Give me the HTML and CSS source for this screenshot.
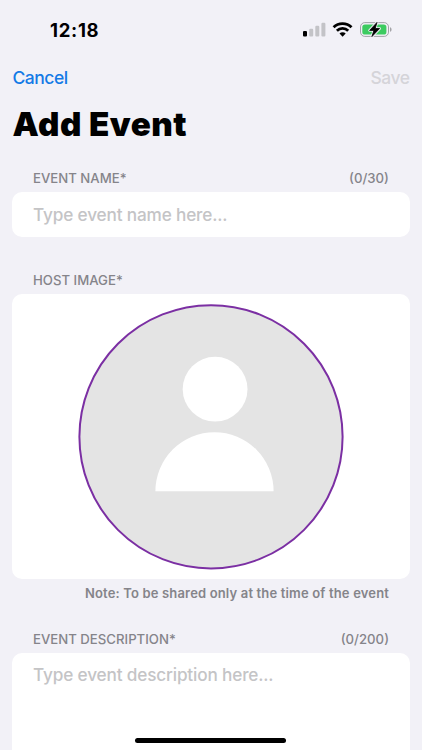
FILE: index.html
```
<!DOCTYPE html>
<html lang="en">
<head>
    <meta charset="UTF-8">
    <meta name="viewport" content="width=device-width, initial-scale=1.0">
    <title>Add Event</title>
    <link rel="stylesheet" href="styles.css">
</head>
<body>
    <div class="status-bar">
        <span class="time">12:18</span>
        <!-- signal, wifi, battery -->
        <svg class="status-icons" width="90" height="16" viewBox="303 22 90 16">
            <rect x="303" y="31" width="4" height="5.6" rx="1.1" fill="#000"/>
            <rect x="309.2" y="28.8" width="4" height="7.8" rx="1.1" fill="#c3c3c7"/>
            <rect x="315.3" y="25.8" width="4" height="10.8" rx="1.1" fill="#c3c3c7"/>
            <rect x="321.4" y="22.8" width="4" height="13.8" rx="1.1" fill="#c3c3c7"/>
            <g fill="none" stroke="#000" stroke-width="2.8">
                <path d="M333.6 27.3a12.7 12.7 0 0 1 17.9 0"/>
                <path d="M336.9 30.8a8 8 0 0 1 11.3 0"/>
            </g>
            <path d="M342.6 36.7l-3.1-3.1a4.4 4.4 0 0 1 6.2 0z"/>
            <rect x="360.5" y="22.6" width="28" height="13.8" rx="4.3" fill="none" stroke="#a3a3a7"/>
            <path d="M390.1 27.2v4.6c1.9-.7 1.9-3.9 0-4.6z" fill="#98989c"/>
            <rect x="362.3" y="24.4" width="24.1" height="10.2" rx="2.7" fill="#3ccb60"/>
            <path d="M377 22.4l-7.4 8h4.3l-2 6.2 7.7-8.1h-4.4z" stroke="#f2f1f7" stroke-width="2.6" stroke-linejoin="round"/>
            <path d="M377 22.4l-7.4 8h4.3l-2 6.2 7.7-8.1h-4.4z" stroke="#000" stroke-width=".8" stroke-linejoin="round"/>
        </svg>
    </div>

    <nav class="nav-bar">
        <a class="cancel-btn">Cancel</a>
        <a class="save-btn">Save</a>
    </nav>
    <h1><span>Add Event</span></h1>

    <section class="name-section">
        <div class="section-header">
            <span class="name-label">EVENT NAME*</span>
            <span class="name-count">(0/30)</span>
        </div>
        <div class="card name-card"><span class="placeholder name-hint">Type event name here...</span></div>
    </section>

    <section class="image-section">
        <div class="section-header">
            <span class="image-label">HOST IMAGE*</span>
        </div>
        <div class="card image-card">
            <svg class="avatar" width="266" height="266" viewBox="78 304 266 266">
                <circle cx="211" cy="436.8" r="131.6" fill="#e4e4e4" stroke="#7b2fa3" stroke-width="2"/>
                <circle cx="215.1" cy="389.2" r="32.4" fill="#fff"/>
                <path d="M155.4 491.3a59.1 59.1 0 0 1 118.2 0z" fill="#fff"/>
            </svg>
        </div>
        <div class="note"><span>Note: To be shared only at the time of the event</span></div>
    </section>

    <section class="description-section">
        <div class="section-header">
            <span class="description-label">EVENT DESCRIPTION*</span>
            <span class="description-count">(0/200)</span>
        </div>
        <div class="card description-card"><span class="placeholder description-hint">Type event description here...</span></div>
    </section>

    <div class="home-indicator"></div>
</body>
</html>
```
FILE: styles.css
```
body {
    font-family: Inter, "Liberation Sans", sans-serif;
    margin: 0;
    height: 750px;
    position: relative;
    overflow: hidden;
    background-color: #f2f1f7;
    color: #000;
    white-space: nowrap;
}
.status-bar {
    display: flex;
    justify-content: space-between;
    align-items: center;
    height: 59px;
    padding: 0 29px 1px 50px;
}
.time {
    font-size: 18.5px;
    font-weight: 700;
    letter-spacing: 0.7px;
}
.nav-bar {
    display: flex;
    justify-content: space-between;
    align-items: center;
    height: 34px;
    padding: 0 12.5px 2px;
    font-size: 17.5px;
    font-weight: 500;
    letter-spacing: -0.5px;
}
.cancel-btn {
    color: #147ae6;
}
.save-btn {
    color: #d5d4d9;
}
h1 {
    margin: 0;
    padding: 8px 12.5px 0;
    height: 60px;
    font-size: 33.2px;
    font-weight: 900;
    line-height: 41px;
    letter-spacing: 0.5px;
}
.section-header {
    display: flex;
    justify-content: space-between;
    align-items: center;
    height: 28px;
    padding: 0 33px;
    font-size: 13.2px;
    font-weight: 500;
    color: #85848a;
}
.card {
    margin: 0 12px;
    background-color: #fff;
    border-radius: 10px;
}
.placeholder {
    font-size: 17.2px;
    font-weight: 500;
    letter-spacing: -0.16px;
    color: #c4c4c6;
}
.name-card {
    display: flex;
    align-items: center;
    height: 45px;
    padding-left: 21px;
}
.image-section {
    padding-top: 29px;
}
.image-card {
    display: flex;
    align-items: center;
    justify-content: center;
    height: 285px;
}
.note {
    display: flex;
    justify-content: flex-end;
    align-items: center;
    height: 28px;
    padding: 0 33px;
    font-size: 13px;
    font-weight: 600;
    letter-spacing: 0.16px;
    color: #85848a;
}
.description-section {
    padding-top: 18px;
}
.description-card {
    height: 110px;
    padding: 11px 0 0 21px;
}
.home-indicator {
    position: absolute;
    left: 135px;
    bottom: 7px;
    width: 151px;
    height: 5px;
    border-radius: 3px;
    background-color: #000;
}
```
